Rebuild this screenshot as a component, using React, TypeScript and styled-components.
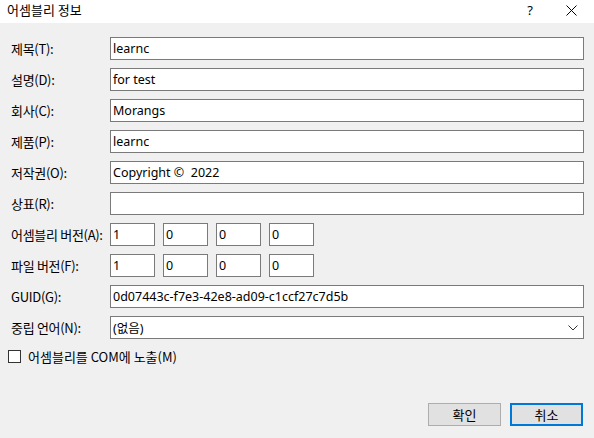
import React from 'react';
import styled, { createGlobalStyle } from 'styled-components';

const GlobalStyle = createGlobalStyle`
  html, body {
    margin: 0;
    padding: 0;
    background: #f0f0f0;
  }
  * {
    box-sizing: border-box;
  }
`;

const Dialog = styled.div`
  width: 594px;
  height: 438px;
  display: flex;
  flex-direction: column;
  background: #f0f0f0;
  font-family: "Noto Sans CJK KR", "Noto Sans", sans-serif;
  font-size: 13px;
  color: #000;
  overflow: hidden;
`;

const TitleBar = styled.div`
  height: 23px;
  flex: none;
  display: flex;
  align-items: center;
  background: #fff;
  padding-left: 7px;
`;

const TitleText = styled.div`
  flex: 1;
  font-size: 13px;
  margin-top: -4px;
`;

const TitleButton = styled.div`
  width: 46px;
  height: 23px;
  display: flex;
  align-items: center;
  justify-content: center;
  margin-top: -3px;
`;

const HelpMark = styled.span`
  font-family: "Noto Sans", sans-serif;
  font-size: 13px;
  margin-left: 10px;
`;

const Body = styled.div`
  flex: 1;
  display: flex;
  flex-direction: column;
  padding: 14px 10px 12px 11px;
`;

const Form = styled.div`
  display: grid;
  grid-template-columns: 99px 1fr;
  row-gap: 8px;
  align-items: center;
`;

const Label = styled.div`
  white-space: nowrap;
  line-height: 23px;
  letter-spacing: -0.3px;
`;

const TextBox = styled.div<{ $width?: number }>`
  height: 23px;
  width: ${(p) => (p.$width ? `${p.$width}px` : 'auto')};
  background: #fff;
  border: 1px solid #7a7a7a;
  padding: 0 2px;
  display: flex;
  align-items: center;
  font-family: "Noto Sans", "Noto Sans CJK KR", sans-serif;
  font-size: 12.5px;
  white-space: pre;
  position: relative;
`;

const VersionRow = styled.div`
  display: flex;
  gap: 8px;
`;

const ComboArrow = styled.svg`
  position: absolute;
  right: 5px;
  top: 8px;
`;

const CheckRow = styled.label`
  display: flex;
  align-items: center;
  gap: 7px;
  margin-top: 8px;
  margin-left: -3px;
`;

const CheckBox = styled.span`
  width: 13px;
  height: 13px;
  border: 1px solid #333;
  background: #fff;
  display: inline-block;
`;

const Footer = styled.div`
  margin-top: auto;
  display: flex;
  justify-content: flex-end;
  gap: 9px;
  padding-right: 1px;
`;

const Button = styled.button<{ $primary?: boolean }>`
  width: 73px;
  height: 23px;
  background: #e1e1e1;
  border: ${(p) => (p.$primary ? '2px solid #0078d7' : '1px solid #adadad')};
  font-family: "Noto Sans CJK KR", sans-serif;
  font-size: 13px;
  color: #000;
  padding: 0;
`;

const fields: [string, string][] = [
  ['제목(T):', 'learnc'],
  ['설명(D):', 'for test'],
  ['회사(C):', 'Morangs'],
  ['제품(P):', 'learnc'],
  ['저작권(O):', 'Copyright ©  2022'],
  ['상표(R):', ''],
];

const versions: [string, string[]][] = [
  ['어셈블리 버전(A):', ['1', '0', '0', '0']],
  ['파일 버전(F):', ['1', '0', '0', '0']],
];

export default function App() {
  return (
    <>
      <GlobalStyle />
      <Dialog>
        <TitleBar>
          <TitleText>어셈블리 정보</TitleText>
          <TitleButton>
            <HelpMark>?</HelpMark>
          </TitleButton>
          <TitleButton>
            <svg width="11" height="11" viewBox="0 0 11 11">
              <path d="M0.5 0.5 L10.5 10.5 M10.5 0.5 L0.5 10.5" stroke="#000" strokeWidth="1" fill="none" />
            </svg>
          </TitleButton>
        </TitleBar>
        <Body>
          <Form>
            {fields.map(([label, value]) => (
              <React.Fragment key={label}>
                <Label>{label}</Label>
                <TextBox>{value}</TextBox>
              </React.Fragment>
            ))}
            {versions.map(([label, parts]) => (
              <React.Fragment key={label}>
                <Label>{label}</Label>
                <VersionRow>
                  {parts.map((v, i) => (
                    <TextBox key={i} $width={45}>
                      {v}
                    </TextBox>
                  ))}
                </VersionRow>
              </React.Fragment>
            ))}
            <Label>GUID(G):</Label>
            <TextBox>0d07443c-f7e3-42e8-ad09-c1ccf27c7d5b</TextBox>
            <Label>중립 언어(N):</Label>
            <TextBox>
              (없음)
              <ComboArrow width="10" height="6" viewBox="0 0 10 6">
                <path d="M0.5 0.5 L5 5 L9.5 0.5" stroke="#333" strokeWidth="1" fill="none" />
              </ComboArrow>
            </TextBox>
          </Form>
          <CheckRow>
            <CheckBox />
            어셈블리를 COM에 노출(M)
          </CheckRow>
          <Footer>
            <Button>확인</Button>
            <Button $primary>취소</Button>
          </Footer>
        </Body>
      </Dialog>
    </>
  );
}
